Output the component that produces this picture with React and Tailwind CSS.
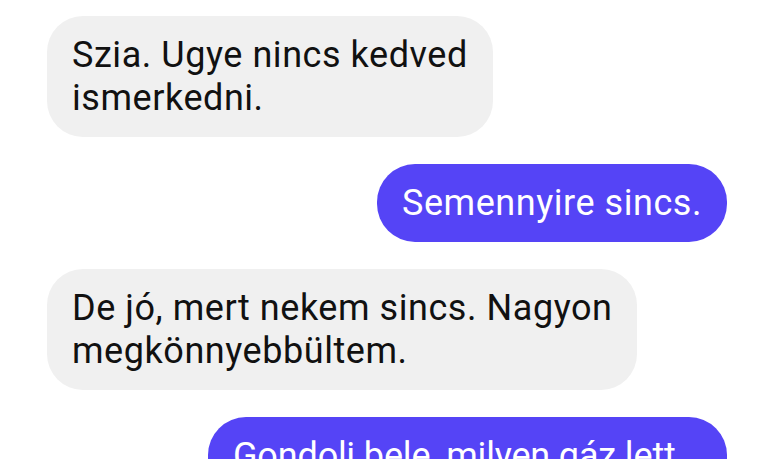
const messages = [
  { id: 1, mine: false, lines: ['Szia. Ugye nincs kedved', 'ismerkedni.'] },
  { id: 2, mine: true, lines: ['Semennyire sincs.'] },
  { id: 3, mine: false, lines: ['De jó, mert nekem sincs. Nagyon', 'megkönnyebbültem.'] },
  { id: 4, mine: true, wide: true, lines: ['Gondolj bele, milyen gáz lett', 'volna, ha mindketten akarjuk.'] },
]

function Bubble({ mine, wide, lines }) {
  let cls = mine
    ? 'self-end rounded-[38px] bg-[#5544f6] text-white px-[25px] pt-[18px] pb-[17px]'
    : 'self-start rounded-[36px] bg-[#f0f0f0] text-[#111111] px-[25px] pt-[18px] pb-[17px]'
  cls += wide ? ' w-[519px] tracking-[-0.15px]' : ' w-fit'
  return (
    <div className={cls}>
      {lines.map((line, i) => (
        <div key={i} className="whitespace-nowrap">{line}</div>
      ))}
    </div>
  )
}

export default function App() {
  return (
    <div
      className="h-[459px] w-[768px] overflow-hidden bg-white pt-4 pl-[47px] pr-[41px] flex flex-col gap-[27px] text-[36px] leading-[43px] tracking-[0.55px]"
      style={{ fontFamily: 'Roboto, "Noto Sans", sans-serif' }}
    >
      {messages.map((m) => (
        <Bubble key={m.id} mine={m.mine} wide={m.wide} lines={m.lines} />
      ))}
    </div>
  )
}
